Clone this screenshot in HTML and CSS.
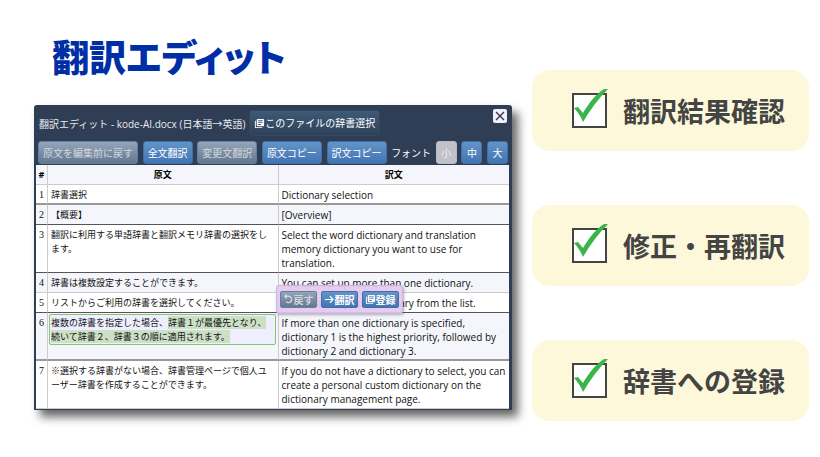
FILE: index.html
```html
<!DOCTYPE html>
<html lang="ja">
<head>
    <meta charset="UTF-8">
    <meta name="viewport" content="width=device-width, initial-scale=1.0">
    <title>翻訳エディット</title>
    <link rel="stylesheet" href="styles.css">
</head>
<body>
    <main class="slide">
        <section class="left">
            <h1>翻訳エディット</h1>
            <div class="editor">
                <div class="titlebar">
                    <span>翻訳エディット - kode-AI.docx (日本語→英語)</span>
                    <button class="dict-button">
                        <svg class="icon" viewBox="0 0 24 24"><path fill="currentColor" d="M4 6H2v14a2 2 0 0 0 2 2h14v-2H4zM20 2H8a2 2 0 0 0-2 2v12a2 2 0 0 0 2 2h12a2 2 0 0 0 2-2V4a2 2 0 0 0-2-2zm-1 5H9V5h10zm0 4H9V9h10zm-4 4H9v-2h6z"/></svg>このファイルの辞書選択
                    </button>
                    <button class="close" aria-label="閉じる">
                        <svg viewBox="0 0 14 14"><path d="M3 3l8 8M11 3l-8 8" stroke="#334" stroke-width="1.3" fill="none"/></svg>
                    </button>
                </div>
                <div class="toolbar">
                    <button class="btn" disabled>原文を編集前に戻す</button>
                    <button class="btn">全文翻訳</button>
                    <button class="btn" disabled>変更文翻訳</button>
                    <button class="btn">原文コピー</button>
                    <button class="btn">訳文コピー</button>
                    <span class="font-label">フォント</span>
                    <button class="btn size current" disabled>小</button>
                    <button class="btn size">中</button>
                    <button class="btn size">大</button>
                </div>
                <table>
                    <colgroup>
                        <col class="col-num">
                        <col>
                        <col>
                    </colgroup>
                    <thead>
                        <tr><th>#</th><th>原文</th><th>訳文</th></tr>
                    </thead>
                    <tbody>
                        <tr class="thick">
                            <td>1</td>
                            <td>辞書選択</td>
                            <td>Dictionary selection</td>
                        </tr>
                        <tr class="dark">
                            <td>2</td>
                            <td>【概要】</td>
                            <td>[Overview]</td>
                        </tr>
                        <tr class="dark">
                            <td>3</td>
                            <td>翻訳に利用する単語辞書と翻訳メモリ辞書の選択をします。</td>
                            <td>Select the word dictionary and translation memory dictionary you want to use for translation.</td>
                        </tr>
                        <tr>
                            <td>4</td>
                            <td>辞書は複数設定することができます。</td>
                            <td>You can set up more than one dictionary.</td>
                        </tr>
                        <tr class="dark">
                            <td>5</td>
                            <td>リストからご利用の辞書を選択してください。</td>
                            <td class="has-popup">
                                Please select your dictionary from the list.
                                <div class="popup">
                                    <button class="btn mini" disabled><svg class="icon" viewBox="0 0 24 24"><path d="M3 5h10a7 7 0 1 1-6 12M8 1L4 5l4 5" fill="none" stroke="currentColor" stroke-width="3"/></svg>戻す</button>
                                    <button class="btn mini"><svg class="icon" viewBox="0 0 24 24"><path d="M2 12h18M13 5l7 7-7 7" fill="none" stroke="currentColor" stroke-width="2.6"/></svg>翻訳</button>
                                    <button class="btn mini"><svg class="icon" viewBox="0 0 24 24"><path fill="currentColor" d="M4 6H2v14a2 2 0 0 0 2 2h14v-2H4zM20 2H8a2 2 0 0 0-2 2v12a2 2 0 0 0 2 2h12a2 2 0 0 0 2-2V4a2 2 0 0 0-2-2zm-1 5H9V5h10zm0 4H9V9h10zm-4 4H9v-2h6z"/></svg>登録</button>
                                </div>
                            </td>
                        </tr>
                        <tr class="thick">
                            <td>6</td>
                            <td class="editing"><div class="edit-box" contenteditable="true" spellcheck="false">複数の辞書を指定した場合、<mark>辞書１が最優先となり、続いて辞書２、辞書３の順に適用されます。</mark></div></td>
                            <td>If more than one dictionary is specified, dictionary 1 is the highest priority, followed by dictionary 2 and dictionary 3.</td>
                        </tr>
                        <tr>
                            <td>7</td>
                            <td>※選択する辞書がない場合、辞書管理ページで個人ユーザー辞書を作成することができます。</td>
                            <td>If you do not have a dictionary to select, you can create a personal custom dictionary on the dictionary management page.</td>
                        </tr>
                    </tbody>
                </table>
            </div>
        </section>

        <section class="points">
            <label class="point">
                <span class="check">
                    <input type="checkbox" checked>
                    <svg viewBox="0 0 36 40"><path fill="#39b54a" d="M2 20l4-1 5 6C17 15 23 7 32 1h4C26 11 18 22 11 34C9 29 6 24 2 20z"/></svg>
                </span>
                翻訳結果確認
            </label>
            <label class="point">
                <span class="check">
                    <input type="checkbox" checked>
                    <svg viewBox="0 0 36 40"><path fill="#39b54a" d="M2 20l4-1 5 6C17 15 23 7 32 1h4C26 11 18 22 11 34C9 29 6 24 2 20z"/></svg>
                </span>
                修正・再翻訳
            </label>
            <label class="point">
                <span class="check">
                    <input type="checkbox" checked>
                    <svg viewBox="0 0 36 40"><path fill="#39b54a" d="M2 20l4-1 5 6C17 15 23 7 32 1h4C26 11 18 22 11 34C9 29 6 24 2 20z"/></svg>
                </span>
                辞書への登録
            </label>
        </section>
    </main>
</body>
</html>
```
FILE: styles.css
```css
* {
    box-sizing: border-box;
}

body {
    margin: 0;
    background-color: #fff;
    font-family: 'Open Sans', 'Noto Sans CJK JP', sans-serif;
}

.slide {
    display: grid;
    grid-template-columns: 478fr 277fr;
    gap: 20px;
    padding: 34px 11px 34px 34px;
}

h1 {
    margin: 0 0 27px 18px;
    font-family: 'Noto Sans CJK JP', sans-serif;
    font-size: 37px;
    font-weight: 900;
    line-height: 44px;
    color: #002ea6;
    font-feature-settings: "palt";
}

.editor {
    background-color: #2f3e55;
    border-radius: 3px 3px 0 0;
    padding: 0 3px 1px 2px;
    box-shadow: 6px 7px 10px rgba(0, 0, 0, 0.6);
}

button {
    font-family: inherit;
    font-size: 10px;
    line-height: 14px;
    color: #fff;
    cursor: pointer;
    white-space: nowrap;
}

.icon {
    width: 11px;
    height: 11px;
    flex: none;
}

.titlebar {
    display: flex;
    align-items: center;
    height: 36px;
    padding-left: 3px;
    color: #e8ebf0;
    font-size: 10px;
    white-space: nowrap;
}

.dict-button {
    display: flex;
    align-items: center;
    height: 26px;
    margin-left: 4px;
    padding: 0 4px;
    border: 1px solid #34485f;
    border-radius: 3px;
    background: linear-gradient(#3d5a76, #2f4159);
}

.close {
    align-self: flex-start;
    display: flex;
    width: 14px;
    height: 14px;
    margin: 4px 2px 0 auto;
    padding: 0;
    border: none;
    border-radius: 2px;
    background-color: #f0effc;
}

.toolbar {
    display: flex;
    align-items: center;
    justify-content: space-between;
    padding: 0 1px 1px 2px;
    color: #fff;
    font-size: 10px;
}

.btn {
    display: flex;
    align-items: center;
    justify-content: center;
    height: 23px;
    padding: 0 4px;
    border: 1px solid #3d6fa8;
    border-radius: 3px;
    background: linear-gradient(#6394c8, #4275b3);
}

.btn:disabled {
    color: #d3d7dd;
    border-color: #5f7fa3;
    background: linear-gradient(#93a5bb, #66788f);
}

.btn.size {
    width: 21px;
}

.btn.current:disabled {
    color: #eee;
    border-color: #b9b9c2;
    background: #c2c1c9;
}

table {
    width: 100%;
    table-layout: fixed;
    border-collapse: separate;
    border-spacing: 0;
    background-color: #fff;
    color: #111;
    font-size: 10px;
    line-height: 14px;
}

.col-num {
    width: 12px;
}

th,
td {
    padding: 3px 3px 2px;
    border-right: 1px solid #ccc;
    border-bottom: 1px solid #ccc;
    text-align: left;
    vertical-align: top;
}

th {
    background-color: #f5f6fb;
    text-align: center;
    font-size: 9px;
    color: #000;
}

th:first-child,
td:first-child {
    padding-left: 0;
    padding-right: 0;
    text-align: center;
}

th:last-child,
td:last-child {
    border-right: none;
}

td:first-child {
    font-family: 'Liberation Serif', serif;
}

td:nth-child(2) {
    padding-right: 8px;
    font-family: 'Noto Sans CJK JP', sans-serif;
    font-size: 9px;
}

tbody tr:nth-child(even) {
    background-color: #f5f6fb;
}

.dark td {
    border-bottom-color: #555;
}

.thick td {
    padding-bottom: 1px;
    border-bottom: 2px solid #999;
}

td.editing:nth-child(2) {
    padding: 1px 2px 1px 1px;
}

.edit-box {
    padding: 1px 1px 0;
    border: 1px solid #84c46c;
    border-radius: 2px;
    background-color: #eeeeff;
}

mark {
    background-color: #cce0c6;
    color: inherit;
}

.has-popup {
    position: relative;
}

.popup {
    position: absolute;
    top: -8px;
    left: -3px;
    display: flex;
    gap: 4px;
    padding: 5px 3px;
    border: 1px solid #c9b4ea;
    border-radius: 3px;
    background-color: rgba(230, 200, 238, 0.92);
    box-shadow: 1px 1px 3px rgba(0, 0, 0, 0.3);
}

.btn.mini {
    width: 37px;
    height: 17px;
    padding: 0;
    border-radius: 2px;
    font-weight: 700;
}

.points {
    display: grid;
    gap: 54px;
    align-content: start;
    padding-top: 36px;
}

.point {
    display: flex;
    align-items: center;
    height: 81px;
    padding-left: 40px;
    border-radius: 18px;
    background-color: #fdf8d9;
    color: #444;
    font-family: 'Noto Sans CJK JP', sans-serif;
    font-size: 27px;
    font-weight: 700;
    white-space: nowrap;
}

.check {
    position: relative;
    display: flex;
    margin-right: 16px;
}

.check input {
    appearance: none;
    width: 35px;
    height: 35px;
    margin: 0;
    border: 2px solid #444;
    background-color: #fff;
}

.check svg {
    position: absolute;
    left: 0;
    bottom: 0;
    width: 36px;
    height: 40px;
}
```
